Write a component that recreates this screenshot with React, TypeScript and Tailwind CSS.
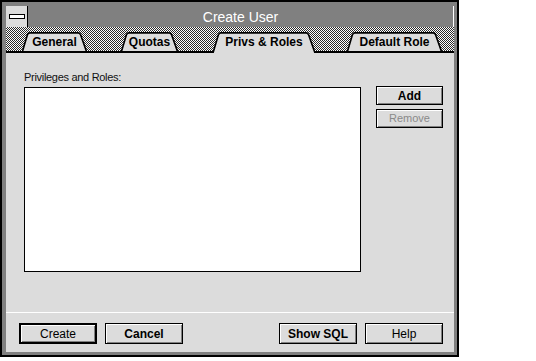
import React from "react";

type Tab = { label: string; w: number; cls: string; active?: boolean };

const tabs: Tab[] = [
  { label: "General", w: 65, cls: "ml-[16px] w-[65px]" },
  { label: "Quotas", w: 57, cls: "ml-[34px] w-[57px]" },
  { label: "Privs & Roles", w: 102, cls: "ml-[35px] w-[102px] z-[2]", active: true },
  { label: "Default Role", w: 95, cls: "ml-[32px] w-[95px]" },
];

const TabShape = ({ w }: { w: number }) => {
  const top = `M0 21 L5.5 2.6 Q6.2 0.9 8 0.9 L${w - 9} 0.9 Q${w - 7.2} 0.9 ${w - 6.5} 2.6 L${w} 21`;
  return (
    <svg className="absolute inset-0" width={w} height={21} viewBox={`0 0 ${w} 21`}>
      <path d={top + " Z"} fill="#dcdcdc" />
      <path d={top} fill="none" stroke="#000" strokeWidth={1.6} />
    </svg>
  );
};

const Btn = ({
  children,
  cls,
}: {
  children: React.ReactNode;
  cls: string;
}) => (
  <button
    className={
      "flex items-center justify-center bg-[#dcdcdc] border-black shadow-[inset_1px_1px_0_#fff,inset_-1px_-1px_0_#808080] leading-none " +
      cls
    }
  >
    {children}
  </button>
);

export default function App() {
  return (
    <div className="w-[536px] h-[361px] bg-white text-black font-['Liberation_Sans',Arial,sans-serif]">
      <div className="w-[459px] h-[357px] border-2 border-black bg-[#808080] pt-[4px] pl-[4px] pr-[3px] pb-[3px] flex flex-col">
        {/* Title bar */}
        <div className="h-[21px] flex border-r border-white">
          <div className="w-[22px] h-[21px] bg-[#dcdcdc] border-r border-black flex items-center justify-center">
            <div className="w-[16px] h-[5px] bg-white border border-black" />
          </div>
          <div className="flex-1 flex items-center justify-center text-white text-[14px] leading-none">
            Create User
          </div>
        </div>

        {/* Tab strip */}
        <div className="relative h-[26px] flex items-end bg-[image:repeating-conic-gradient(#2a2a2a_0_25%,#fff_0_50%)] bg-[length:2px_2px]">
          {tabs.map((t) => (
            <div key={t.label} className={"relative h-[21px] shrink-0 " + t.cls}>
              <TabShape w={t.w} />
              <div className="relative h-full flex items-center justify-center pb-[2px] text-[12px] font-bold leading-none">
                {t.label}
              </div>
            </div>
          ))}
          <div className="absolute left-0 right-0 bottom-0 h-[2px] bg-black z-[1]" />
        </div>

        {/* Body */}
        <div className="flex-1 bg-[#dcdcdc] flex flex-col">
          <div className="flex pl-[18px] pr-[11px] pt-[17px]">
            <div className="flex flex-col">
              <div className="h-[14px] text-[11px] leading-[14px] tracking-[-0.3px] text-[#111]">
                Privileges and Roles:
              </div>
              <div className="mt-[3px] w-[337px] h-[185px] bg-white border border-black" />
            </div>
            <div className="ml-[15px] pt-[16px] flex flex-col gap-[4px]">
              <Btn cls="w-[67px] h-[19px] border text-[12px] font-bold">Add</Btn>
              <Btn cls="w-[67px] h-[19px] border text-[11px] text-[#8a8a8a]">Remove</Btn>
            </div>
          </div>

          <div className="flex-1" />

          <div className="border-t border-white pt-[10px] pb-[8px] pl-[13px] pr-[11px] flex">
            <Btn cls="w-[78px] h-[21px] border-2 text-[12px]">Create</Btn>
            <Btn cls="ml-[8px] w-[78px] h-[21px] border text-[12px] font-bold">Cancel</Btn>
            <Btn cls="ml-auto w-[78px] h-[21px] border text-[12px] font-bold">Show SQL</Btn>
            <Btn cls="ml-[8px] w-[78px] h-[21px] border text-[12px]">Help</Btn>
          </div>
        </div>
      </div>
    </div>
  );
}
